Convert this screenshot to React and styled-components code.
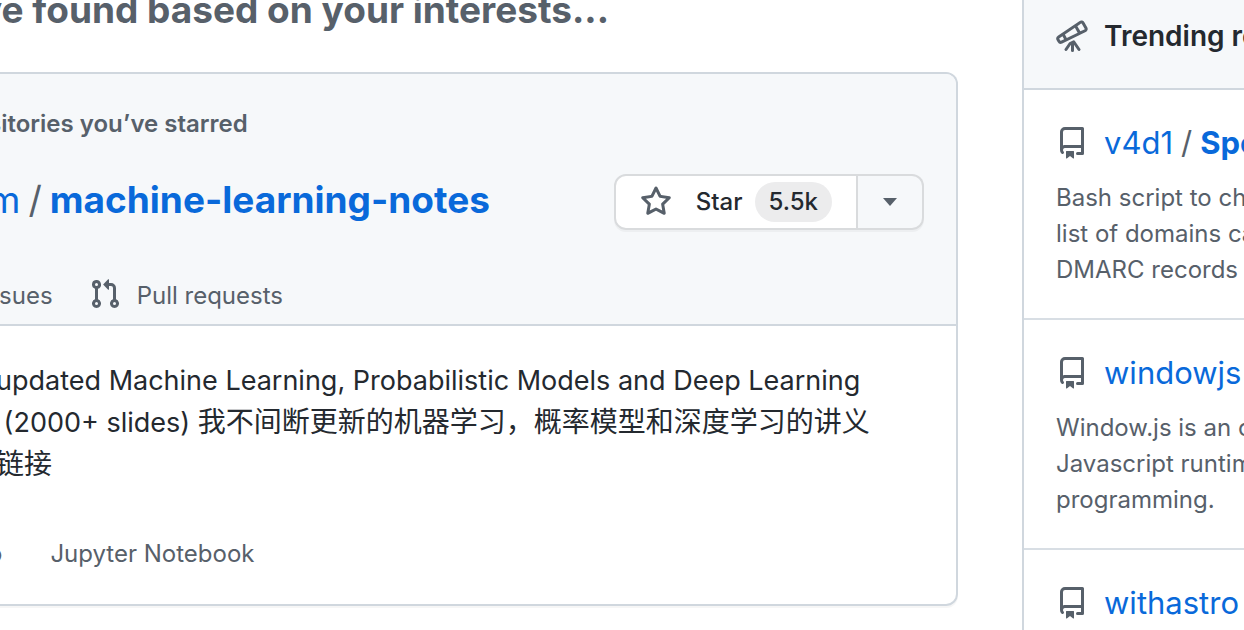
import React from "react";
import styled, { createGlobalStyle } from "styled-components";

const Global = createGlobalStyle`
  *, *::before, *::after { box-sizing: border-box; }
  html, body { margin: 0; overflow: hidden; }
  body {
    background: #fff;
    color: #24292f;
    font-family: Inter, "Noto Sans CJK SC", sans-serif;
    font-size: 24px;
    line-height: 36px;
  }
  h1, h2, h3, p, ul { margin: 0; padding: 0; }
  h1, h2, h3 { font-weight: 600; }
  a { color: inherit; text-decoration: none; }
`;

const Page = styled.div`
  display: flex;
  gap: 64px;
  height: 100vh;
  overflow: hidden;
  white-space: nowrap;
`;

const Main = styled.main`
  flex: 1;
  min-width: 0;
  margin-left: -20px;
  margin-top: -14px;
`;

const Heading = styled.h1`
  margin-bottom: 38px;
  color: #57606a;
  font-size: 37px;
  font-weight: 700;
  line-height: 48px;
`;

const Card = styled.article`
  border: 2px solid #d0d7de;
  border-left: 0;
  border-radius: 0 12px 12px 0;
  box-shadow: 0 2px 0 rgba(27, 31, 36, 0.04);
  overflow: hidden;
`;

const CardHeader = styled.header`
  padding: 32px 32px 10px 0;
  background: #f6f8fa;
  border-bottom: 2px solid #d0d7de;
`;

const Reason = styled.p`
  padding-left: 8px;
  color: #57606a;
  font-weight: 600;
`;

const TitleRow = styled.div`
  display: flex;
  align-items: flex-start;
  justify-content: space-between;
  margin-top: 32px;
  padding-left: 8px;
`;

const RepoTitle = styled.h2`
  color: #57606a;
  font-size: ${(p) => (p.$large ? 37 : 31)}px;
  font-weight: 400;
  line-height: ${(p) => (p.$large ? 52 : 42)}px;
`;

const Slash = styled.span`
  margin: 0 8px;
`;

const RepoLink = styled.a`
  color: #0969da;
  font-weight: ${(p) => (p.$strong ? 700 : 400)};
`;

const ButtonGroup = styled.div`
  display: flex;
  height: 56px;
  border-radius: 12px;
  box-shadow: 0 2px 0 rgba(27, 31, 36, 0.04);
`;

const Button = styled.button`
  display: flex;
  align-items: center;
  padding: 0 24px;
  border: 2px solid #d9dbdd;
  border-radius: ${(p) => (p.$end ? "0 12px 12px 0" : "12px 0 0 12px")};
  border-left-width: ${(p) => (p.$end ? 0 : 2)}px;
  background: ${(p) => (p.$end ? "#f6f8fa" : "#fff")};
  color: #24292f;
  font: 500 24px/36px Inter, sans-serif;
`;

const ButtonLabel = styled.span`
  margin: 0 12px 0 24px;
`;

const Count = styled.span`
  padding: 0 14px;
  border-radius: 20px;
  background: #ececed;
  line-height: 40px;
`;

const Caret = styled.span`
  margin: 2px 1px;
  border: 7px solid transparent;
  border-top: 8px solid #57606a;
  border-bottom: 0;
`;

const Tabs = styled.nav`
  display: flex;
  gap: 36px;
  margin-top: 48px;
  color: #57606a;
`;

const Tab = styled.a`
  display: flex;
  align-items: flex-start;
  gap: 16px;
`;

const CardBody = styled.div`
  padding: 34px 32px 32px 0;
`;

const Description = styled.p`
  padding-left: 16px;
  font-size: 27px;
  line-height: 42px;
`;

const Chinese = styled.span.attrs({ lang: "zh" })`
  font-size: 28px;
  line-height: 28px;
`;

const Meta = styled.ul`
  display: flex;
  gap: 48px;
  margin-top: 50px;
  padding-left: 8px;
  color: #57606a;
  list-style: none;
`;

const Sidebar = styled.aside`
  flex: 0 0 222px;
  border-left: 2px solid #d0d7de;
  overflow: hidden;
`;

const SidebarHeader = styled.header`
  display: flex;
  align-items: center;
  gap: 16px;
  height: 90px;
  padding: 0 32px 16px;
  background: #f6f8fa;
  border-bottom: 2px solid #d0d7de;
`;

const SidebarTitle = styled.h2`
  font-size: 28px;
`;

const TrendingItem = styled.section`
  padding: 32px 32px 30px;
  border-bottom: 2px solid #d8dee4;
`;

const TrendingName = styled.div`
  display: flex;
  align-items: center;
  gap: 16px;
  margin-bottom: 16px;
`;

const TrendingText = styled.p`
  color: #57606a;
`;

const Svg = styled.svg`
  flex: none;
  width: 32px;
  height: 32px;
  fill: #57606a;
`;

const paths = {
  star: "M8 .25a.75.75 0 01.673.418l1.882 3.815 4.21.612a.75.75 0 01.416 1.279l-3.046 2.97.719 4.192a.75.75 0 01-1.088.791L8 12.347l-3.766 1.98a.75.75 0 01-1.088-.79l.72-4.194L.818 6.374a.75.75 0 01.416-1.28l4.21-.611L7.327.668A.75.75 0 018 .25zm0 2.445L6.615 5.5a.75.75 0 01-.564.41l-3.097.45 2.24 2.184a.75.75 0 01.216.664l-.528 3.084 2.769-1.456a.75.75 0 01.698 0l2.77 1.456-.53-3.084a.75.75 0 01.216-.664l2.24-2.183-3.096-.45a.75.75 0 01-.564-.41L8 2.694v.001z",
  pull: "M7.177 3.073L9.573.677A.25.25 0 0110 .854v4.792a.25.25 0 01-.427.177L7.177 3.427a.25.25 0 010-.354zM3.75 2.5a.75.75 0 100 1.5.75.75 0 000-1.5zm-2.25.75a2.25 2.25 0 113 2.122v5.256a2.251 2.251 0 11-1.5 0V5.372A2.25 2.25 0 011.5 3.25zM11 2.5h-1V4h1a1 1 0 011 1v5.628a2.251 2.251 0 101.5 0V5A2.5 2.5 0 0011 2.5zm1 10.25a.75.75 0 111.5 0 .75.75 0 01-1.5 0zM3.75 12a.75.75 0 100 1.5.75.75 0 000-1.5z",
  repo: "M2 2.5A2.5 2.5 0 014.5 0h8.75a.75.75 0 01.75.75v12.5a.75.75 0 01-.75.75h-2.5a.75.75 0 110-1.5h1.75v-2h-8a1 1 0 00-.714 1.7.75.75 0 01-1.072 1.05A2.495 2.495 0 012 11.5v-9zm10.5-1V9h-8c-.356 0-.694.074-1 .208V2.5a1 1 0 011-1h8zM5 12.25v3.25a.25.25 0 00.4.2l1.45-1.087a.25.25 0 01.3 0L8.6 15.7a.25.25 0 00.4-.2v-3.25a.25.25 0 00-.25-.25h-3.5a.25.25 0 00-.25.25z",
  telescope: "M14.184 1.143a1.75 1.75 0 00-2.502-.57L.912 7.916a1.75 1.75 0 00-.53 2.32l.447.775a1.75 1.75 0 002.275.702l11.745-5.656a1.75 1.75 0 00.757-2.451l-1.422-2.464zm-1.657.669a.25.25 0 01.358.081l1.422 2.464a.25.25 0 01-.108.35l-2.016.97-1.505-2.605 1.85-1.26zM9.436 3.92l1.391 2.41-5.42 2.61-.942-1.63 4.97-3.39zM3.222 8.157l-1.466 1a.25.25 0 00-.075.33l.447.775a.25.25 0 00.325.1l1.598-.769-.83-1.436zm6.253 2.306a.75.75 0 00-.944-.252l-1.809.87a.75.75 0 00-.293.253L4.38 14.326a.75.75 0 101.238.848l1.881-2.75v2.826a.75.75 0 001.5 0v-2.826l1.881 2.75a.75.75 0 001.238-.848l-2.644-3.863z",
};

function Icon({ name }) {
  return (
    <Svg viewBox="0 0 16 16" aria-hidden="true">
      <path fillRule="evenodd" d={paths[name]} />
    </Svg>
  );
}

const trending = [
  { owner: "v4d1", repo: "Spo", lines: ["Bash script to ch", "list of domains ca", "DMARC records"] },
  { owner: "windowjs", lines: ["Window.js is an o", "Javascript runtim", "programming."] },
  { owner: "withastro", lines: [] },
];

export default function App() {
  return (
    <>
      <Global />
      <Page>
        <Main>
          <Heading>ve found based on your interests...</Heading>
          <Card>
            <CardHeader>
              <Reason>sitories you’ve starred</Reason>
              <TitleRow>
                <RepoTitle $large>
                  <RepoLink href="#owner">m</RepoLink>
                  <Slash>/</Slash>
                  <RepoLink href="#repo" $strong>machine-learning-notes</RepoLink>
                </RepoTitle>
                <ButtonGroup>
                  <Button type="button">
                    <Icon name="star" />
                    <ButtonLabel>Star</ButtonLabel>
                    <Count>5.5k</Count>
                  </Button>
                  <Button type="button" $end aria-label="Add to a list">
                    <Caret />
                  </Button>
                </ButtonGroup>
              </TitleRow>
              <Tabs>
                <Tab href="#issues">Issues</Tab>
                <Tab href="#pulls">
                  <Icon name="pull" />
                  Pull requests
                </Tab>
              </Tabs>
            </CardHeader>
            <CardBody>
              <Description>
                updated Machine Learning, Probabilistic Models and Deep Learning
                <br />
                &nbsp;(2000+ slides) <Chinese>我不间断更新的机器学习，概率模型和深度学习的讲义</Chinese>
                <br />
                <Chinese>链接</Chinese>
              </Description>
              <Meta>
                <li>o</li>
                <li>Jupyter Notebook</li>
              </Meta>
            </CardBody>
          </Card>
        </Main>
        <Sidebar>
          <SidebarHeader>
            <Icon name="telescope" />
            <SidebarTitle>Trending re</SidebarTitle>
          </SidebarHeader>
          {trending.map((item) => (
            <TrendingItem key={item.owner}>
              <TrendingName>
                <Icon name="repo" />
                <RepoTitle as="h3">
                  <RepoLink href={`#${item.owner}`}>{item.owner}</RepoLink>
                  {item.repo && (
                    <>
                      <Slash>/</Slash>
                      <RepoLink href={`#${item.repo}`} $strong>{item.repo}</RepoLink>
                    </>
                  )}
                </RepoTitle>
              </TrendingName>
              <TrendingText>
                {item.lines.map((line) => (
                  <React.Fragment key={line}>
                    {line}
                    <br />
                  </React.Fragment>
                ))}
              </TrendingText>
            </TrendingItem>
          ))}
        </Sidebar>
      </Page>
    </>
  );
}
